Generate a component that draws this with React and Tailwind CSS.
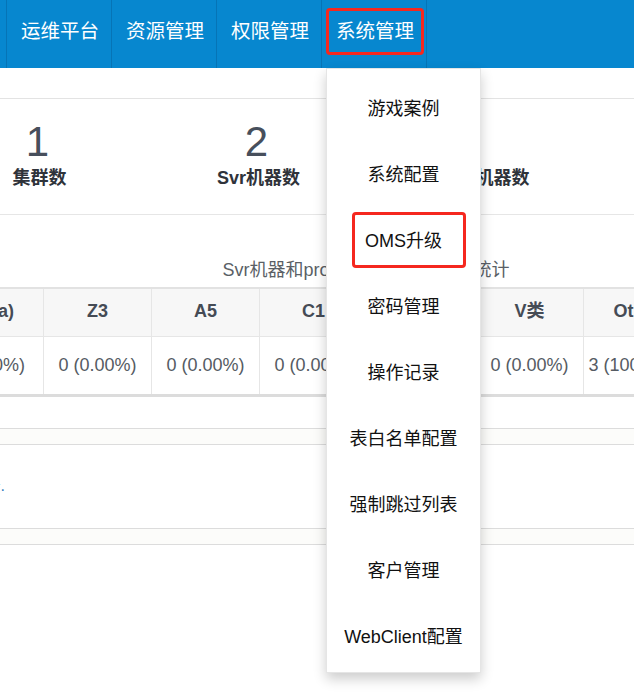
import React from "react";

const FONT = { fontFamily: '"Liberation Sans", Arial, "Noto Sans CJK SC", sans-serif' };

const navItems = ["运维平台", "资源管理", "权限管理", "系统管理"];
const menuItems = ["游戏案例", "系统配置", "OMS升级", "密码管理", "操作记录", "表白名单配置", "强制跳过列表", "客户管理", "WebClient配置"];
const stats = [
  { n: "1", label: "集群数", nc: "" },
  { n: "2", label: "Svr机器数", nc: "" },
  { n: "1", label: "Proxy机器数", nc: "mr-[12px]" },
  { n: "3", label: "机型数", nc: "" },
];
const cols = [
  { h: "S5(Sa)", v: "0 (0.00%)", w: "w-[115px]" },
  { h: "Z3", v: "0 (0.00%)", w: "w-[108px]" },
  { h: "A5", v: "0 (0.00%)", w: "w-[108px]" },
  { h: "C1", v: "0 (0.00%)", w: "w-[108px]" },
  { h: "M10", v: "0 (0.00%)", w: "w-[108px]" },
  { h: "V类", v: "0 (0.00%)", w: "w-[108px]" },
  { h: "Other", v: "3 (100.00%)", w: "w-[108px]" },
  { h: "总计", v: "3", w: "w-[113px]" },
];

export default function App() {
  return (
    <div className="relative w-[634px] h-[697px] overflow-hidden bg-white" style={FONT}>
      {/* top nav */}
      <div className="h-[68px] bg-[#0787cf] flex">
        <div className="w-[7px] border-r border-[#0674b6]" />
        {navItems.map((t) => (
          <div key={t} className="w-[105px] border-r border-[#0674b6] flex items-center justify-center pb-[5px] pl-[2px] text-white text-[19.5px]">
            {t}
          </div>
        ))}
      </div>

      {/* page body, scrolled horizontally */}
      <div className="w-[876px] ml-[-72px]">
        <div className="h-[31px] border-b border-[#e3e3e3]" />

        <div className="h-[116px] grid grid-cols-4 border-b border-[#e6e6e6] pt-[22px]">
          {stats.map((s, i) => (
            <div key={i} className="flex flex-col items-center">
              <div className={`text-[42px] leading-[42px] text-[#474f5c] ${s.nc}`}>{s.n}</div>
              <div className="mt-[3px] ml-[4px] text-[18px] leading-[24px] font-bold text-[#2f333a]">{s.label}</div>
            </div>
          ))}
        </div>

        <div className="pt-[43px] pb-[5px] text-center text-[18px] leading-[24px] text-[#5a5f66]">
          Svr机器和proxy机器的机型分布统计
        </div>

        <table className="table-fixed border-collapse w-[876px] text-[18px]">
          <thead>
            <tr className="bg-[#f7f7f7] h-[48px] border-t-2 border-[#e2e2e2]">
              {cols.map((c) => (
                <th key={c.h} className={`${c.w} border-x border-[#e6e6e6] font-bold text-[#454b55] pb-[2px]`}>{c.h}</th>
              ))}
            </tr>
          </thead>
          <tbody>
            <tr className="h-[59px] border-t border-b-[3px] border-t-[#e6e6e6] border-b-[#dcdcdc]">
              {cols.map((c) => (
                <td key={c.h} className="border-x border-[#e6e6e6] text-center text-[#555b63] whitespace-nowrap overflow-hidden">{c.v}</td>
              ))}
            </tr>
          </tbody>
        </table>

        <div className="h-[31px]" />
        <div className="h-[17px] bg-[#fcfcfa] border-y border-[#dcdcdc]" />
        <div className="h-[83px] flex items-center">
          <div className="w-[77px] text-right text-[16px] text-[#3a7fc0] whitespace-nowrap">暂无数据.</div>
        </div>
        <div className="h-[17px] bg-[#fcfcfa] border-y border-[#dcdcdc]" />
      </div>

      {/* dropdown menu */}
      <div className="absolute left-[326px] top-[68px] w-[155px] h-[605px] bg-white border border-black/10 shadow-[0_6px_12px_rgba(0,0,0,0.2)] pt-[7px]">
        {menuItems.map((m) => (
          <div key={m} className="h-[66px] flex items-center justify-center text-[18px] text-[#111]">
            {m}
          </div>
        ))}
      </div>

      {/* red annotation boxes */}
      <div className="absolute left-[326px] top-[8px] w-[98px] h-[47px] border-[3px] border-[#f5281f] rounded-[4px]" />
      <div className="absolute left-[352px] top-[212px] w-[114px] h-[56px] border-[3px] border-[#f5281f] rounded-[4px]" />
    </div>
  );
}
